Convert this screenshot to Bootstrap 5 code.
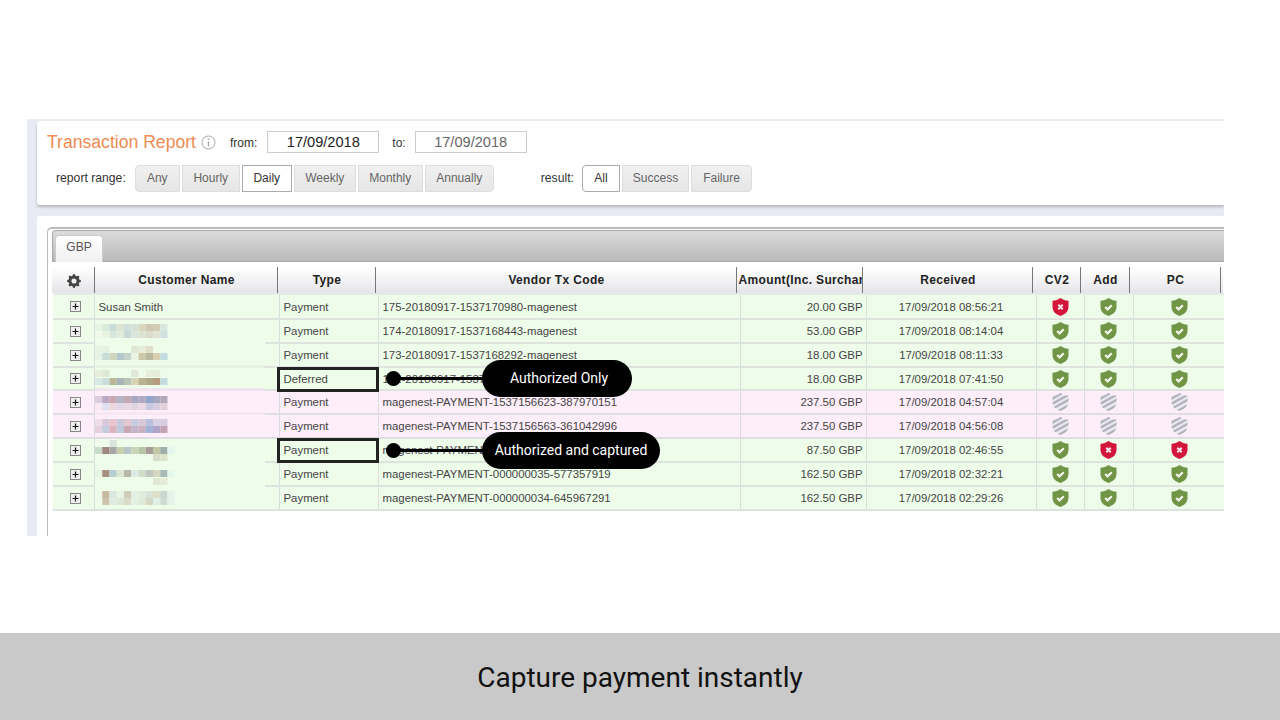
<!DOCTYPE html>
<html lang="en"><head><meta charset="utf-8"><title>Capture payment instantly</title>
<link href="https://cdn.jsdelivr.net/npm/bootstrap@5.3.0/dist/css/bootstrap.min.css" rel="stylesheet">
<style>
html,body{height:720px;overflow:hidden;background:#fff}
body{font-family:"Liberation Sans",Arial,sans-serif;color:#444}
.stage{height:633px;padding:119px 56px 97px 27px;position:relative}
.shot{height:417px;background:#e8ebf3;padding:2px 0 0 10px;overflow:hidden}
.panel-a{height:84px;background:#fff;box-shadow:0 2px 3px #b4b6bc;margin-bottom:11px;padding:9px 0 0 10px;border-radius:3px 0 0 3px}
.panel-b{height:320px;background:#fff;padding:11px 0 0 10px;border-radius:3px 0 0 0}
.title-a{font-size:17.600px;color:#ee8b52;line-height:22px}
.info-ic{margin:0 14px 0 5px;color:#aaa}
.lbl{font-size:12px;color:#333;line-height:22px;padding-top:2px}
.lbl-b{font-size:12.200px;color:#333;line-height:22px;padding-bottom:2px}
.date-in{width:112px;height:22px;border:1px solid #ccc;font-size:14.600px;text-align:center;line-height:20px;color:#222;margin:0 13px 0 10px}
.date-in.dim{color:#666;margin-left:9px}
.line-b{margin:11px 0 0 9px}
.rng{display:grid;grid-template-columns:45px 58px 50px 62px 65px 69px;gap:2px;margin:0 47px 0 9px}
.res{display:grid;grid-template-columns:38px 67px 61px;gap:2px;margin-left:8px}
.rng .btn,.res .btn{--bs-btn-border-radius:0;font-size:12px;padding:0;height:27px;line-height:25px;background:linear-gradient(#f0f0f0,#e6e6e6);border:1px solid #ddd;color:#666}
.rng .btn.on,.res .btn.on{background:#fff;border-color:#aaa;color:#333}
.rng .btn:first-child,.res .btn:first-child{border-radius:4px 0 0 4px}
.rng .btn:last-child,.res .btn:last-child{border-radius:0 4px 4px 0}
.grid-box{height:309px;border:1px solid #bbb;border-width:2px 0 0 1px;border-radius:5px 0 0 0;padding:1px 0 0 4px;position:relative}
.bar-a{height:32px;background:linear-gradient(#dcdcdc,#b9b9b9);border-bottom:1px solid #aaa;border-left:1px solid #aaa;border-top:1px solid #aaa;padding:4px 0 0 2px;border-radius:4px 0 0 0}
.tab-a{width:48px;height:27px;background:linear-gradient(#fff,#f0f0f0);border:1px solid #ccc;border-bottom:0;border-radius:4px 4px 0 0;font-size:12px;line-height:23px;text-align:center;color:#555}
.tbl-head,.tbl-body{table-layout:fixed;margin:0;--bs-table-bg:transparent;border-collapse:collapse}
.tbl-head{width:1171px;margin-top:5px;height:25px}
.tbl-body{width:1173px;margin-left:1px}
.tbl-head th{padding:1px 0 0 2px;border:0;font-size:12px;letter-spacing:.35px;font-weight:700;color:#222;text-align:center;background:linear-gradient(#fff,#e5e5e9);vertical-align:middle;border-right:1px solid #777;white-space:nowrap;overflow:hidden;line-height:25px;height:25px}
.tbl-head th:last-child{border-right:0}
.h1{width:42px}.h2{width:183px}.h3{width:98px}.h4{width:361px}.h5{width:126px}.h6{width:170px}.h7{width:48px}.h8{width:49px}.h9{width:91px}.h10{width:3px}
.b1{width:41px}.b2{width:185px}.b3{width:99px}.b4{width:362px}.b5{width:126px}.b6{width:170px}.b7{width:48px}.b8{width:49px}.b9{width:93px}
.gap-a{height:2px;background:#e7e8e8;width:1171px;margin-left:1px}
.tbl-body td{padding:0 3px 0 4px;height:24px;line-height:18px;font-size:11.400px;color:#444;border:0;border-right:1px solid #d9dedc;border-bottom:2px solid #dde4dd;vertical-align:middle;white-space:nowrap;overflow:hidden}
.tbl-body td.ctr{text-align:center;padding:0}
.tbl-body td.plc{padding:0 0 0 5px}
.tbl-body td.rgt{text-align:right}
.tbl-body td svg{display:block;margin:0 auto}
.tbl-body tr.r-s td{height:23px}
.r-ok td{background:#eefdea}
.r-no td{background:#fdeef9;border-bottom-color:#e0dce4}
.smudge{position:absolute;left:95px;top:295px}
.hilite{position:absolute;left:277px;width:102px;height:25px;border:3px solid #222}
.hl1{top:367px}.hl2{top:438px}
.dot-a{position:absolute;left:386px;width:15px;height:15px;border-radius:50%;background:#000}
.dt1{top:371px}.dt2{top:443px}
.wire{position:absolute;left:393px;width:100px;height:3px;background:#000}
.wr1{top:377px}.wr2{top:449px}
.pill-a{position:absolute;left:482px;height:37px;border-radius:19px;background:#000;color:#fff;font-family:Roboto,sans-serif;font-size:14px;line-height:37px;text-align:center;font-weight:400}
.pl1{top:360px;width:150px;padding-left:4px}.pl2{top:432px;width:178px}
.cap-a{height:87px;background:#c9c9c9;font-family:Roboto,sans-serif;font-size:28px;color:#111;padding-top:3px}
</style></head>
<body>
<svg width="0" height="0" class="position-absolute">
<defs>
<path id="sh" d="M8.5 0C10.6 1.6 13.6 2.7 16.5 2.8V9C16.500 13.500 13 16.500 8.500 18C4 16.500 .5 13.500 .5 9V2.800C3.400 2.700 6.400 1.600 8.500 0Z"/>
<clipPath id="shc"><use href="#sh"/></clipPath>
<symbol id="ok" viewBox="0 0 17 18"><use href="#sh" fill="#6f9545"/><path d="M5.200 9l2.400 2.400 4.200-4.200" fill="none" stroke="#f2f6ea" stroke-width="2.200"/></symbol>
<symbol id="bad" viewBox="0 0 17 18"><use href="#sh" fill="#d3153c"/><path d="M6.300 6.800l4.400 4.400M10.700 6.800l-4.400 4.400" stroke="#f8e6ea" stroke-width="2"/></symbol>
<symbol id="na" viewBox="0 0 17 18"><use href="#sh" fill="#eceaf0"/><g clip-path="url(#shc)" stroke="#b1b3bf" stroke-width="2.400"><path d="M-2 7L12-1M-2 12L18 1M0 16L18 6M3 20L19 11M8 21L19 15"/></g></symbol>
<symbol id="pl" viewBox="0 0 11 11"><rect x=".5" y=".5" width="10" height="10" fill="#f0f0f0" stroke="#888"/><path d="M5.500 2.500v6M2.500 5.500h6" stroke="#111" stroke-width="1.200"/></symbol>
</defs></svg>

<div class="stage">
<div class="shot">
  <div class="panel-a">
    <div class="d-flex align-items-center">
      <span class="title-a">Transaction Report</span>
      <svg class="info-ic" width="15" height="15" viewBox="0 0 15 15"><circle cx="7.500" cy="7.500" r="6.500" fill="none" stroke="#aaa"/><path d="M7.500 6.500v5M7.500 3.500v1.500" stroke="#aaa" stroke-width="1.400"/></svg>
      <span class="lbl">from:</span><span class="date-in">17/09/2018</span>
      <span class="lbl">to:</span><span class="date-in dim">17/09/2018</span>
    </div>
    <div class="d-flex align-items-center line-b">
      <span class="lbl-b">report range:</span>
      <div class="rng"><a class="btn">Any</a><a class="btn">Hourly</a><a class="btn on">Daily</a><a class="btn">Weekly</a><a class="btn">Monthly</a><a class="btn">Annually</a></div>
      <span class="lbl-b">result:</span>
      <div class="res"><a class="btn on">All</a><a class="btn">Success</a><a class="btn">Failure</a></div>
    </div>
  </div>
  <div class="panel-b">
    <div class="grid-box">
      <div class="bar-a"><div class="tab-a">GBP</div></div>
      <table class="table tbl-head"><colgroup><col class="h1"><col class="h2"><col class="h3"><col class="h4"><col class="h5"><col class="h6"><col class="h7"><col class="h8"><col class="h9"><col class="h10"></colgroup>
      <thead><tr><th><svg width="14" height="14" viewBox="0 0 16 16" fill="#444" class="d-block mx-auto"><path d="M9.405 1.050c-.413-1.400-2.397-1.400-2.810 0l-.100.340a1.464 1.464 0 0 1-2.105.872l-.310-.170c-1.283-.698-2.686.705-1.987 1.987l.169.311c.446.820.023 1.841-.872 2.105l-.340.100c-1.400.413-1.400 2.397 0 2.810l.340.100a1.464 1.464 0 0 1 .872 2.105l-.170.310c-.698 1.283.705 2.686 1.987 1.987l.311-.169a1.464 1.464 0 0 1 2.105.872l.100.340c.413 1.400 2.397 1.400 2.810 0l.100-.340a1.464 1.464 0 0 1 2.105-.872l.310.170c1.283.698 2.686-.705 1.987-1.987l-.169-.311a1.464 1.464 0 0 1 .872-2.105l.340-.100c1.400-.413 1.400-2.397 0-2.810l-.340-.100a1.464 1.464 0 0 1-.872-2.105l.170-.310c.698-1.283-.705-2.686-1.987-1.987l-.311.169a1.464 1.464 0 0 1-2.105-.872l-.100-.340zM8 10.930a2.929 2.929 0 1 1 0-5.860 2.929 2.929 0 0 1 0 5.858z"/></svg></th><th>Customer Name</th><th>Type</th><th>Vendor Tx Code</th><th>Amount(Inc. Surcharge)</th><th>Received</th><th>CV2</th><th>Add</th><th>PC</th><th></th></tr></thead></table>
      <div class="gap-a"></div>
      <table class="table tbl-body"><colgroup><col class="b1"><col class="b2"><col class="b3"><col class="b4"><col class="b5"><col class="b6"><col class="b7"><col class="b8"><col class="b9"></colgroup>
      <tbody>
      <tr class="r-ok"><td class="plc"><svg width="11" height="11"><use href="#pl"/></svg></td><td>Susan Smith</td><td>Payment</td><td>175-20180917-1537170980-magenest</td><td class="rgt">20.00 GBP</td><td class="ctr">17/09/2018 08:56:21</td><td class="ctr"><svg width="17" height="18"><use href="#bad"/></svg></td><td class="ctr"><svg width="17" height="18"><use href="#ok"/></svg></td><td class="ctr"><svg width="17" height="18"><use href="#ok"/></svg></td></tr>
      <tr class="r-ok"><td class="plc"><svg width="11" height="11"><use href="#pl"/></svg></td><td></td><td>Payment</td><td>174-20180917-1537168443-magenest</td><td class="rgt">53.00 GBP</td><td class="ctr">17/09/2018 08:14:04</td><td class="ctr"><svg width="17" height="18"><use href="#ok"/></svg></td><td class="ctr"><svg width="17" height="18"><use href="#ok"/></svg></td><td class="ctr"><svg width="17" height="18"><use href="#ok"/></svg></td></tr>
      <tr class="r-ok"><td class="plc"><svg width="11" height="11"><use href="#pl"/></svg></td><td></td><td>Payment</td><td>173-20180917-1537168292-magenest</td><td class="rgt">18.00 GBP</td><td class="ctr">17/09/2018 08:11:33</td><td class="ctr"><svg width="17" height="18"><use href="#ok"/></svg></td><td class="ctr"><svg width="17" height="18"><use href="#ok"/></svg></td><td class="ctr"><svg width="17" height="18"><use href="#ok"/></svg></td></tr>
      <tr class="r-ok r-s"><td class="plc"><svg width="11" height="11"><use href="#pl"/></svg></td><td></td><td>Deferred</td><td>172-20180917-1537167000-magenest</td><td class="rgt">18.00 GBP</td><td class="ctr">17/09/2018 07:41:50</td><td class="ctr"><svg width="17" height="18"><use href="#ok"/></svg></td><td class="ctr"><svg width="17" height="18"><use href="#ok"/></svg></td><td class="ctr"><svg width="17" height="18"><use href="#ok"/></svg></td></tr>
      <tr class="r-no"><td class="plc"><svg width="11" height="11"><use href="#pl"/></svg></td><td></td><td>Payment</td><td>magenest-PAYMENT-1537156623-387970151</td><td class="rgt">237.50 GBP</td><td class="ctr">17/09/2018 04:57:04</td><td class="ctr"><svg width="17" height="18"><use href="#na"/></svg></td><td class="ctr"><svg width="17" height="18"><use href="#na"/></svg></td><td class="ctr"><svg width="17" height="18"><use href="#na"/></svg></td></tr>
      <tr class="r-no"><td class="plc"><svg width="11" height="11"><use href="#pl"/></svg></td><td></td><td>Payment</td><td>magenest-PAYMENT-1537156563-361042996</td><td class="rgt">237.50 GBP</td><td class="ctr">17/09/2018 04:56:08</td><td class="ctr"><svg width="17" height="18"><use href="#na"/></svg></td><td class="ctr"><svg width="17" height="18"><use href="#na"/></svg></td><td class="ctr"><svg width="17" height="18"><use href="#na"/></svg></td></tr>
      <tr class="r-ok"><td class="plc"><svg width="11" height="11"><use href="#pl"/></svg></td><td></td><td>Payment</td><td>magenest-PAYMENT-000000036-414325171</td><td class="rgt">87.50 GBP</td><td class="ctr">17/09/2018 02:46:55</td><td class="ctr"><svg width="17" height="18"><use href="#ok"/></svg></td><td class="ctr"><svg width="17" height="18"><use href="#bad"/></svg></td><td class="ctr"><svg width="17" height="18"><use href="#bad"/></svg></td></tr>
      <tr class="r-ok"><td class="plc"><svg width="11" height="11"><use href="#pl"/></svg></td><td></td><td>Payment</td><td>magenest-PAYMENT-000000035-577357919</td><td class="rgt">162.50 GBP</td><td class="ctr">17/09/2018 02:32:21</td><td class="ctr"><svg width="17" height="18"><use href="#ok"/></svg></td><td class="ctr"><svg width="17" height="18"><use href="#ok"/></svg></td><td class="ctr"><svg width="17" height="18"><use href="#ok"/></svg></td></tr>
      <tr class="r-ok"><td class="plc"><svg width="11" height="11"><use href="#pl"/></svg></td><td></td><td>Payment</td><td>magenest-PAYMENT-000000034-645967291</td><td class="rgt">162.50 GBP</td><td class="ctr">17/09/2018 02:29:26</td><td class="ctr"><svg width="17" height="18"><use href="#ok"/></svg></td><td class="ctr"><svg width="17" height="18"><use href="#ok"/></svg></td><td class="ctr"><svg width="17" height="18"><use href="#ok"/></svg></td></tr>
      </tbody></table>
    </div>
  </div>
</div>
<svg class="smudge" id="smg" width="172" height="215"></svg>
<div class="hilite hl1"></div><div class="hilite hl2"></div>
<div class="wire wr1"></div><div class="wire wr2"></div>
<div class="dot-a dt1"></div><div class="dot-a dt2"></div>
<div class="pill-a pl1">Authorized Only</div>
<div class="pill-a pl2">Authorized and captured</div>
</div>
<div class="cap-a d-flex align-items-center justify-content-center">Capture payment instantly</div>
<script>
var rows=[
[29,"e4f5e4 d8ead8 c9ddd6 dde6d6 d0dfd8 d6e2d6 d8d8c0 d0c8b0 d2ccb4 d8e8e0"],
[36,"eef9ea e8f3e0 d8e6dc e0ebdc c8dad6 d8e6de dde4d2 d8dcc8 e0e4d4 d0e0e0"],
[51,"e8f3e4 e6f0e0 - - - e0e6d4 e6ecd8 e0e0c8 - -"],
[58,"e6f2e6 c8dcd8 d0d6bc b4c8cc c4d4c8 eaf4e4 ccc8a8 b8b8a0 d8d0b0 c4dce0"],
[75,"e4eed8 dfe8d4 - - - e0e8d8 - e8f0dc e4eed8 -"],
[83,"d8e8e4 c8dcd8 b8b898 a8b4b8 b8c4b4 d8d4b8 b8b090 b0a888 b89c80 c4dce0"],
[101,"dccce0 bca8c0 c8a8b4 b4b4c4 c4a8b4 a8a8c4 b0a8c0 90a4cc a8a8c0 b4a8b8"],
[108,"f8e8f4 e0e0f0 ecd8dc e0d8e8 e8d8e4 e0d4e0 ecd8e4 c8c8e0 d8cce0 e0d0dc"],
[124,"f0dce8 d8c8dc e8c4cc c8c8d8 e4c8d0 c8cce0 d8c8d8 b8c0dc d8d0e4 d8cce0"],
[131,"e4d0e0 c4cce0 dcb4bc c0c8dc c8a8b4 c4b4c8 c8b0c0 a0b4d8 b0a4c8 c4a4b4"],
[145,"- - d8e4dc - - - - - - -"],
[152,"c8dcc8 a08880 a8a8a8 c8d0b0 b8c4c8 ccd4b8 b8c4a8 a89c98 c0c8a8 a0b0a8 e4f8f0"],
[159,"- - - - - - - - d8dcc8 dce4cc"],
[175,"e4f4e0 a89080 b8d0d4 dce8d4 b8b8a8 dcece4 d0dcc8 c0c8c0 d4d8c0 a8bcb4 e4f8ea"],
[183,"- - - - - - - - e0e8d4 e4ecd8"],
[196,"- c8b8a0 d8e8e0 e8f4e4 d0ccb8 e4f0e4 e0ecdc d8e4d8 e0e0c8 c8d8d0 e4f4e8"],
[203,"- ccc4ac e0eae0 dce8d4 d8dcc8 e4f2e4 e0e8d8 d4d8c4 e0f0e4 ccdcd4 e4f4e8"]
];
var bars=[[46,"eefdea"],[70,"e6f2e4"],[93,"f0e4ee"],[117,"f6e8f2"],[165,"eefdea"],[189,"eefdea"]];
var h="";
bars.forEach(function(b){h+='<rect x="0" y="'+b[0]+'" width="170" height="3" fill="#'+b[1]+'"/>';});
rows.forEach(function(r){r[1].split(" ").forEach(function(c,i){if(c!="-")h+='<rect x="'+(i*7.25)+'" y="'+r[0]+'" width="7.25" height="7" fill="#'+c+'"/>';});});
document.getElementById("smg").innerHTML=h;
</script>
</body></html>
